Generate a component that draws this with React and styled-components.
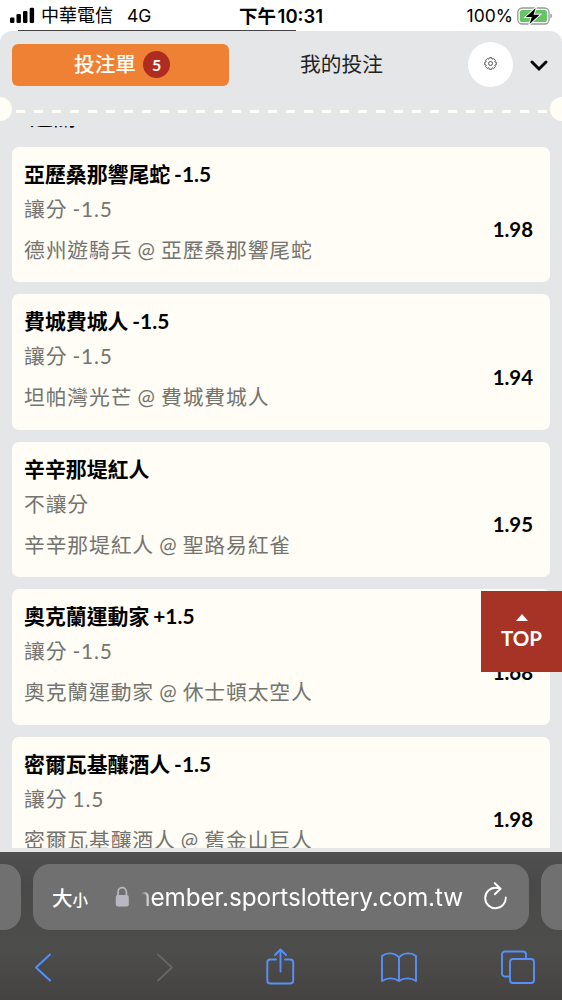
import React from "react";
import styled, { createGlobalStyle } from "styled-components";

const Global = createGlobalStyle`
  *, *::before, *::after { box-sizing: border-box; }
  html, body { margin: 0; padding: 0; }
  body { background: #fff; overflow: hidden; }
`;

const lato = `Lato, "Noto Sans CJK TC", sans-serif`;
const system = `Inter, "Noto Sans CJK TC", sans-serif`;

const Phone = styled.div`
  position: relative;
  width: 562px;
  height: 1000px;
  overflow: hidden;
  display: flex;
  flex-direction: column;
  background: #fff;
  color: #000;
`;

const StatusBar = styled.header`
  height: 30px;
  flex: none;
  display: grid;
  grid-template-columns: 1fr auto 1fr;
  align-items: center;
  padding: 0 9px;
  font: 400 18px/30px ${system};
  white-space: nowrap;
`;

const StatusSide = styled.div`
  display: flex;
  align-items: center;
  justify-content: ${(p) => (p.$end ? "flex-end" : "flex-start")};
  svg { display: block; }
`;

const Carrier = styled.span`
  margin: 1px 14px 0 6px;
`;

const Network = styled.span`
  margin-top: 1px;
  font-size: 17.5px;
`;

const Clock = styled.span`
  font-weight: 600;
  font-size: 18.5px;
  margin-top: 1px;
  word-spacing: -3px;
`;

const Battery = styled.span`
  margin: 1px 4px 0 0;
  font-size: 17.5px;
`;

const PageEdge = styled.div`
  height: 1px;
  flex: none;
  width: 278px;
  margin-left: 18px;
  background: #444;
`;

const Slip = styled.main`
  height: 821px;
  flex: none;
  display: flex;
  flex-direction: column;
  background: #e4e6e8;
  border-radius: 12px 12px 0 0;
  font-family: ${lato};
`;

const Tabs = styled.nav`
  height: 66px;
  flex: none;
  display: flex;
  align-items: center;
  padding: 0 13px 0 12px;
`;

const Tab = styled.div`
  display: flex;
  align-items: center;
  justify-content: center;
  gap: 7px;
  width: ${(p) => (p.$active ? 217 : 225)}px;
  height: 42px;
  margin-top: 1px;
  border-radius: 6px;
  font-size: 20.7px;
  line-height: 41px;
  background: ${(p) => (p.$active ? "#ee8133" : "transparent")};
  color: ${(p) => (p.$active ? "#fffdf5" : "#222")};
  font-weight: ${(p) => (p.$active ? 500 : 400)};
  padding-left: ${(p) => (p.$active ? 3 : 0)}px;
`;

const Count = styled.span`
  width: 27px;
  height: 27px;
  border-radius: 50%;
  background: #b02c20;
  text-align: center;
  font-size: 16px;
  font-weight: 700;
  line-height: 27px;
`;

const RoundButton = styled.div`
  width: 45px;
  height: 45px;
  margin-left: 14px;
  border-radius: 50%;
  background: #fff;
  display: flex;
  align-items: center;
  justify-content: center;
  padding-bottom: 2px;
`;

const Collapse = styled.div`
  margin: 4px 0 0 16px;
  display: flex;
`;

const Perforation = styled.div`
  height: 28px;
  flex: none;
  display: flex;
  align-items: center;
  justify-content: space-between;
  margin: -2px -12px 0;
`;

const Notch = styled.div`
  width: 24px;
  height: 24px;
  flex: none;
  border-radius: 50%;
  background: #fffdf5;
`;

const Dashes = styled.div`
  flex: 1;
  height: 3px;
  margin: 4px 3px 0 4px;
  background: repeating-linear-gradient(90deg, #fffdf5 0 9px, transparent 9px 18px);
`;

const BetList = styled.section`
  height: 722px;
  flex: none;
  margin-top: 3px;
  padding: 0 12px;
  overflow: hidden;
  display: flex;
  flex-direction: column;
  gap: 12px;
`;

const Heading = styled.div`
  height: 30px;
  flex: none;
  margin-top: -21.5px;
  padding-left: 18px;
  font-size: 23px;
  line-height: 22px;
`;

const Card = styled.article`
  height: 135.5px;
  flex: none;
  padding: 12px 17px 0 12px;
  border-radius: 7px;
  background: #fffdf5;
  display: flex;
  justify-content: space-between;
  white-space: nowrap;
`;

const Title = styled.div`
  font-size: 20.9px;
  line-height: 30px;
  font-weight: 700;
  word-spacing: -1.2px;
`;

const Line = styled.div`
  margin-top: ${(p) => p.$gap}px;
  font-size: 20.8px;
  line-height: 30px;
  letter-spacing: 0.87px;
  word-spacing: -1px;
  color: #747470;
  font-weight: 400;
`;

const Odds = styled.div`
  padding-top: 55.5px;
  font-size: 20.4px;
  line-height: 30px;
  font-weight: 700;
`;

const TopButton = styled.div`
  position: absolute;
  right: 0;
  top: 591px;
  width: 81px;
  height: 81px;
  background: #a63326;
  color: #fff;
  display: flex;
  flex-direction: column;
  align-items: center;
  padding-top: 23px;
  font: 700 20.5px/26px ${lato};
  gap: 4px;
`;

const Browser = styled.footer`
  flex: 1;
  background: linear-gradient(#505050, #494949 22%, #4d4d4b 65%, #454342);
  font-family: ${system};
  display: flex;
  flex-direction: column;
`;

const AddressRow = styled.div`
  display: flex;
  justify-content: space-between;
  gap: 12px;
  height: 66px;
  margin: 12px 0 0;
`;

const Neighbor = styled.div`
  width: 21px;
  flex: none;
  background: #707070;
  border-radius: ${(p) => (p.$right ? "17px 0 0 17px" : "0 17px 17px 0")};
`;

const Address = styled.div`
  flex: 1;
  min-width: 0;
  background: #707070;
  border-radius: 17px;
  display: flex;
  align-items: center;
  padding: 0 21px 0 19px;
  color: #fff;
  white-space: nowrap;
`;

const TextSize = styled.span`
  font-size: 20.5px;
  font-weight: 500;
  flex: none;
  width: 63px;
  small { font-size: 15.5px; }
`;

const Lock = styled.svg`
  flex: none;
`;

const Url = styled.span`
  flex: 1;
  min-width: 0;
  margin-left: 11px;
  overflow: hidden;
  display: flex;
  justify-content: flex-end;
  font-size: 24.3px;
  letter-spacing: -0.1px;
  line-height: 36px;
  mask-image: linear-gradient(90deg, transparent 0, #000 10px);
`;

const Reload = styled.span`
  display: flex;
  flex: none;
  margin-left: 20px;
`;

const Toolbar = styled.div`
  display: grid;
  grid-template-columns: repeat(5, 1fr);
  justify-items: center;
  margin: 17px -15px 0 -16px;
  svg { display: block; fill: none; stroke: #5690fa; stroke-width: 1.9; stroke-linecap: round; stroke-linejoin: round; }
`;

const ForwardIcon = styled.svg`
  margin-left: 7px;
  && { stroke: #666; }
`;

const bets = [
  ["亞歷桑那響尾蛇 -1.5", "讓分 -1.5", "德州遊騎兵 @ 亞歷桑那響尾蛇", "1.98"],
  ["費城費城人 -1.5", "讓分 -1.5", "坦帕灣光芒 @ 費城費城人", "1.94"],
  ["辛辛那堤紅人", "不讓分", "辛辛那堤紅人 @ 聖路易紅雀", "1.95"],
  ["奧克蘭運動家 +1.5", "讓分 -1.5", "奧克蘭運動家 @ 休士頓太空人", "1.68"],
  ["密爾瓦基釀酒人 -1.5", "讓分 1.5", "密爾瓦基釀酒人 @ 舊金山巨人", "1.98"],
];

const gearPath = Array.from({ length: 8 }, (_, i) => {
  const point = (r, deg) => {
    const a = ((i * 45 + deg) * Math.PI) / 180;
    return `${(6.5 + r * Math.sin(a)).toFixed(2)} ${(6.5 - r * Math.cos(a)).toFixed(2)}`;
  };
  return `${i ? "L" : "M"}${point(5.9, -12)}L${point(5.9, 12)}L${point(4.8, 18)}L${point(4.8, 27)}`;
}).join("") + "Z";

function BetCard({ bet: [title, kind, match, odds] }) {
  return (
    <Card>
      <div>
        <Title>{title}</Title>
        <Line $gap={5}>{kind}</Line>
        <Line $gap={11}>{match}</Line>
      </div>
      <Odds>{odds}</Odds>
    </Card>
  );
}

export default function App() {
  return (
    <Phone>
      <Global />
      <StatusBar>
        <StatusSide>
          <svg width="26" height="17" viewBox="0 0 26 17">
            <rect x="1" y="10.5" width="4.4" height="5.5" rx="1.2" />
            <rect x="7.5" y="7" width="4.4" height="9" rx="1.2" />
            <rect x="14" y="4" width="4.4" height="12" rx="1.2" />
            <rect x="20.7" y="0.7" width="4.4" height="15.3" rx="1.2" />
          </svg>
          <Carrier>中華電信</Carrier>
          <Network>4G</Network>
        </StatusSide>
        <Clock>下午 10:31</Clock>
        <StatusSide $end>
          <Battery>100%</Battery>
          <svg width="36" height="18" viewBox="0 0 36 18">
            <rect x="0.8" y="1" width="31.2" height="16" rx="4.5" fill="#fff" stroke="#999" strokeWidth="1.3" />
            <rect x="2.8" y="3" width="27.2" height="12" rx="2.6" fill="#65c466" />
            <path d="M33.3 6.5v5c2.2-.7 2.2-4.3 0-5Z" fill="#999" />
            <path d="M18.7 1 8.8 10.1h6L12.6 17l10-9.3h-6.1Z" stroke="#fff" strokeWidth="2" />
            <path d="M18.7 1 8.8 10.1h6L12.6 17l10-9.3h-6.1Z" />
          </svg>
        </StatusSide>
      </StatusBar>
      <PageEdge />
      <Slip>
        <Tabs>
          <Tab $active>投注單<Count>5</Count></Tab>
          <Tab>我的投注</Tab>
          <RoundButton>
            <svg width="13" height="13" fill="none" stroke="#444" strokeWidth=".9" strokeLinejoin="round">
              <path d={gearPath} />
              <circle cx="6.5" cy="6.5" r="2" />
            </svg>
          </RoundButton>
          <Collapse>
            <svg width="20" height="12" fill="none" stroke="#080808" strokeWidth="3" strokeLinecap="round">
              <path d="m3 2 7 7 7-7" />
            </svg>
          </Collapse>
        </Tabs>
        <Perforation><Notch /><Dashes /><Notch /></Perforation>
        <BetList>
          <Heading>過關</Heading>
          {bets.map((bet) => <BetCard key={bet[0]} bet={bet} />)}
        </BetList>
      </Slip>
      <TopButton>
        <svg width="12" height="7" fill="#fff"><path d="M0 7 6 0l6 7Z" /></svg>
        <span>TOP</span>
      </TopButton>
      <Browser>
        <AddressRow>
          <Neighbor />
          <Address>
            <TextSize>大<small>小</small></TextSize>
            <Lock width="15" height="22" fill="none">
              <path d="M3 10V6.2C3 .1 11.4.1 11.4 6.2V10" stroke="#b9b8c0" strokeWidth="1.7" />
              <rect x=".8" y="9" width="13" height="11.5" rx="2" fill="#b9b8c0" />
            </Lock>
            <Url>member.sportslottery.com.tw</Url>
            <Reload>
              <svg width="25" height="30" fill="none" stroke="#fff" strokeWidth="1.9" strokeLinecap="round" strokeLinejoin="round">
                <path d="M22.8 15.5A10.3 10.3 0 1 1 12.5 5.7c2 0 3.400.2 5 .9M11.8 1.200l5.800 5.500-5.800 5.500" />
              </svg>
            </Reload>
          </Address>
          <Neighbor $right />
        </AddressRow>
        <Toolbar>
          <svg width="22" height="40"><path d="M18 7.5 4 20.5l14 13" /></svg>
          <ForwardIcon width="22" height="40"><path d="m4 7.5 14 13-14 13" /></ForwardIcon>
          <svg width="32" height="40"><path d="M12 12.5H6.3a3 3 0 0 0-3 3v18a3 3 0 0 0 3 3h19.9a3 3 0 0 0 3-3v-18a3 3 0 0 0-3-3H21M16.500 24.500V2.500m-5.500 5.500 5.500-5.500 5.500 5.500" /></svg>
          <svg width="38" height="40"><path d="M19 10.5C14.5 5.3 6.5 5.3 2 9v25c5-3.5 12-3.5 17 0 5-3.5 12-3.5 17 0V9c-4.500-3.700-12.500-3.700-17 1.500V34" /></svg>
          <svg width="36" height="40"><path d="M8.5 29.5H5a3 3 0 0 1-3-3V7.5a3 3 0 0 1 3-3h18a3 3 0 0 1 3 3V12" /><rect x="10" y="12" width="24" height="24" rx="3" /></svg>
        </Toolbar>
      </Browser>
    </Phone>
  );
}
